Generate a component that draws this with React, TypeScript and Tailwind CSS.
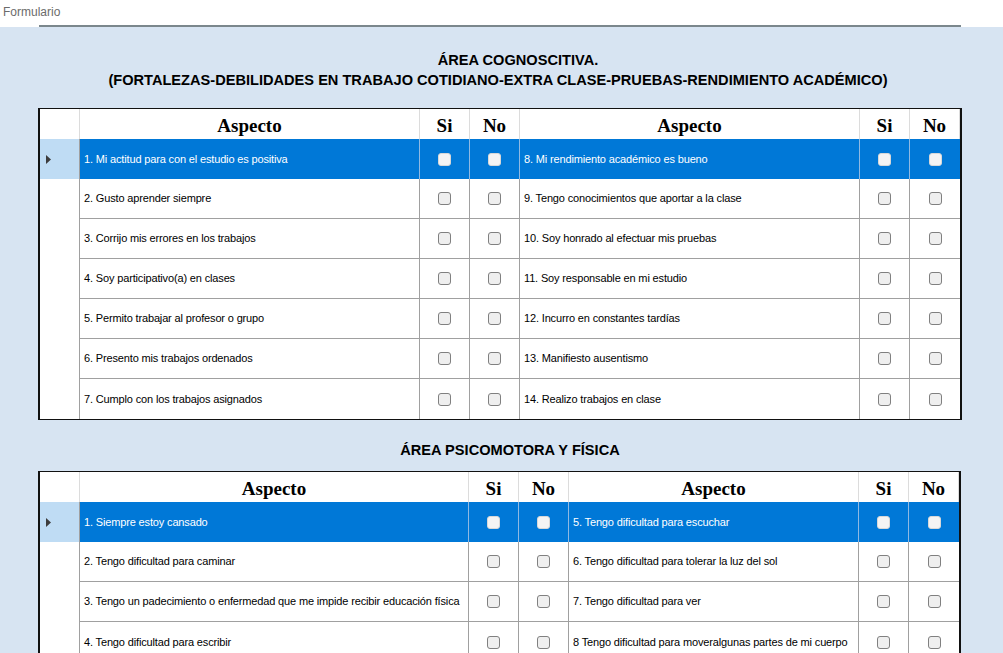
import React from "react";

type Row = { left: string; right: string };

const cognitiva: Row[] = [
  { left: "1. Mi actitud para con el estudio es positiva", right: "8. Mi rendimiento académico es bueno" },
  { left: "2. Gusto aprender siempre", right: "9. Tengo conocimientos que aportar a la clase" },
  { left: "3. Corrijo mis errores en los trabajos", right: "10. Soy honrado al efectuar mis pruebas" },
  { left: "4. Soy participativo(a) en clases", right: "11. Soy responsable en mi estudio" },
  { left: "5. Permito trabajar al profesor o grupo", right: "12. Incurro en constantes tardías" },
  { left: "6. Presento mis trabajos ordenados", right: "13. Manifiesto ausentismo" },
  { left: "7. Cumplo con los trabajos asignados", right: "14. Realizo trabajos en clase" },
];

const psicomotora: Row[] = [
  { left: "1. Siempre estoy cansado", right: "5. Tengo dificultad para escuchar" },
  { left: "2. Tengo dificultad para caminar", right: "6. Tengo dificultad para tolerar la luz del sol" },
  { left: "3. Tengo un padecimiento o enfermedad que me impide recibir educación física", right: "7. Tengo dificultad para ver" },
  { left: "4. Tengo dificultad para escribir", right: "8 Tengo dificultad para moveralgunas partes de mi cuerpo" },
];

const Check = ({ selected }: { selected: boolean }) => (
  <div
    className={
      selected
        ? "w-[13px] h-[13px] rounded-[3px] border border-[#d8d8d8] bg-[#f4f4f4]"
        : "w-[13px] h-[13px] rounded-[3px] border border-[#808080] bg-[#efefef]"
    }
  />
);

const HeadCell = ({ label }: { label: string }) => (
  <div
    className="flex items-center justify-center pt-[3px] border-r border-[#dcdcdc] border-b border-b-[#a0a0a0] font-bold text-[19px] text-black"
    style={{ fontFamily: '"Liberation Serif", serif' }}
  >
    {label}
  </div>
);

const Grid = ({ rows, cols }: { rows: Row[]; cols: string }) => {
  return (
    <div className="mx-[38px] w-fit border-x-2 border-t border-b border-[#111] bg-white">
      <div className={`grid ${cols} h-[30px]`}>
        <div className="border-r border-[#dcdcdc] border-b border-b-[#a0a0a0]" />
        <HeadCell label="Aspecto" />
        <HeadCell label="Si" />
        <HeadCell label="No" />
        <HeadCell label="Aspecto" />
        <HeadCell label="Si" />
        <HeadCell label="No" />
      </div>
      {rows.map((r, i) => {
        const sel = i === 0;
        const last = i === rows.length - 1;
        const cell = sel
          ? "border-r border-[#8fb9e3] bg-[#0078d7] text-white"
          : `border-r border-[#a0a0a0] ${last ? "" : "border-b"} bg-white text-black`;
        const text = `${cell} flex items-center pl-[4px] text-[11px] tracking-[-0.15px] whitespace-nowrap overflow-hidden`;
        const box = `${cell} flex items-center justify-center`;
        return (
          <div key={i} className={`grid ${cols} h-[40px]`}>
            <div
              className={`flex items-center pl-[6px] border-r border-[#a0a0a0] ${
                sel ? "bg-[#bfdcf4]" : "bg-white"
              }`}
            >
              {sel && (
                <svg width="5" height="9" viewBox="0 0 5 9">
                  <path d="M0 0 L5 4.5 L0 9 Z" fill="#3c3c3c" />
                </svg>
              )}
            </div>
            <div className={text}>{r.left}</div>
            <div className={box}>
              <Check selected={sel} />
            </div>
            <div className={box}>
              <Check selected={sel} />
            </div>
            <div className={text}>{r.right}</div>
            <div className={box}>
              <Check selected={sel} />
            </div>
            <div className={`${box} border-r-0`}>
              <Check selected={sel} />
            </div>
          </div>
        );
      })}
    </div>
  );
};

const App = () => {
  return (
    <div
      className="w-[1003px] h-[653px] overflow-hidden bg-[#d7e4f2]"
      style={{ fontFamily: '"Liberation Sans", Arial, sans-serif' }}
    >
      <div className="h-[27px] bg-white flex flex-col">
        <div className="pl-[3px] pt-[4px] text-[12px] leading-[16px] text-[#6b6b6b]">Formulario</div>
        <div className="mt-auto ml-[39px] w-[922px] h-[2px] bg-[#7b878c]" />
      </div>

      <div className="pt-[23px] text-center font-bold text-[14.6px] leading-[20px] text-black">
        <div className="pl-[33px]">ÁREA COGNOSCITIVA.</div>
        <div className="pr-[7px]">(FORTALEZAS-DEBILIDADES EN TRABAJO COTIDIANO-EXTRA CLASE-PRUEBAS-RENDIMIENTO ACADÉMICO)</div>
      </div>

      <div className="mt-[18px]">
        <Grid rows={cognitiva} cols="grid-cols-[40px_340px_50px_50px_340px_50px_50px]" />
      </div>

      <div className="mt-[20px] text-center font-bold text-[14.6px] leading-[20px] text-black pl-[17px]">
        ÁREA PSICOMOTORA Y FÍSICA
      </div>

      <div className="mt-[11px]">
        <Grid rows={psicomotora} cols="grid-cols-[40px_389px_50px_50px_290px_50px_50px]" />
      </div>
    </div>
  );
};

export default App;
